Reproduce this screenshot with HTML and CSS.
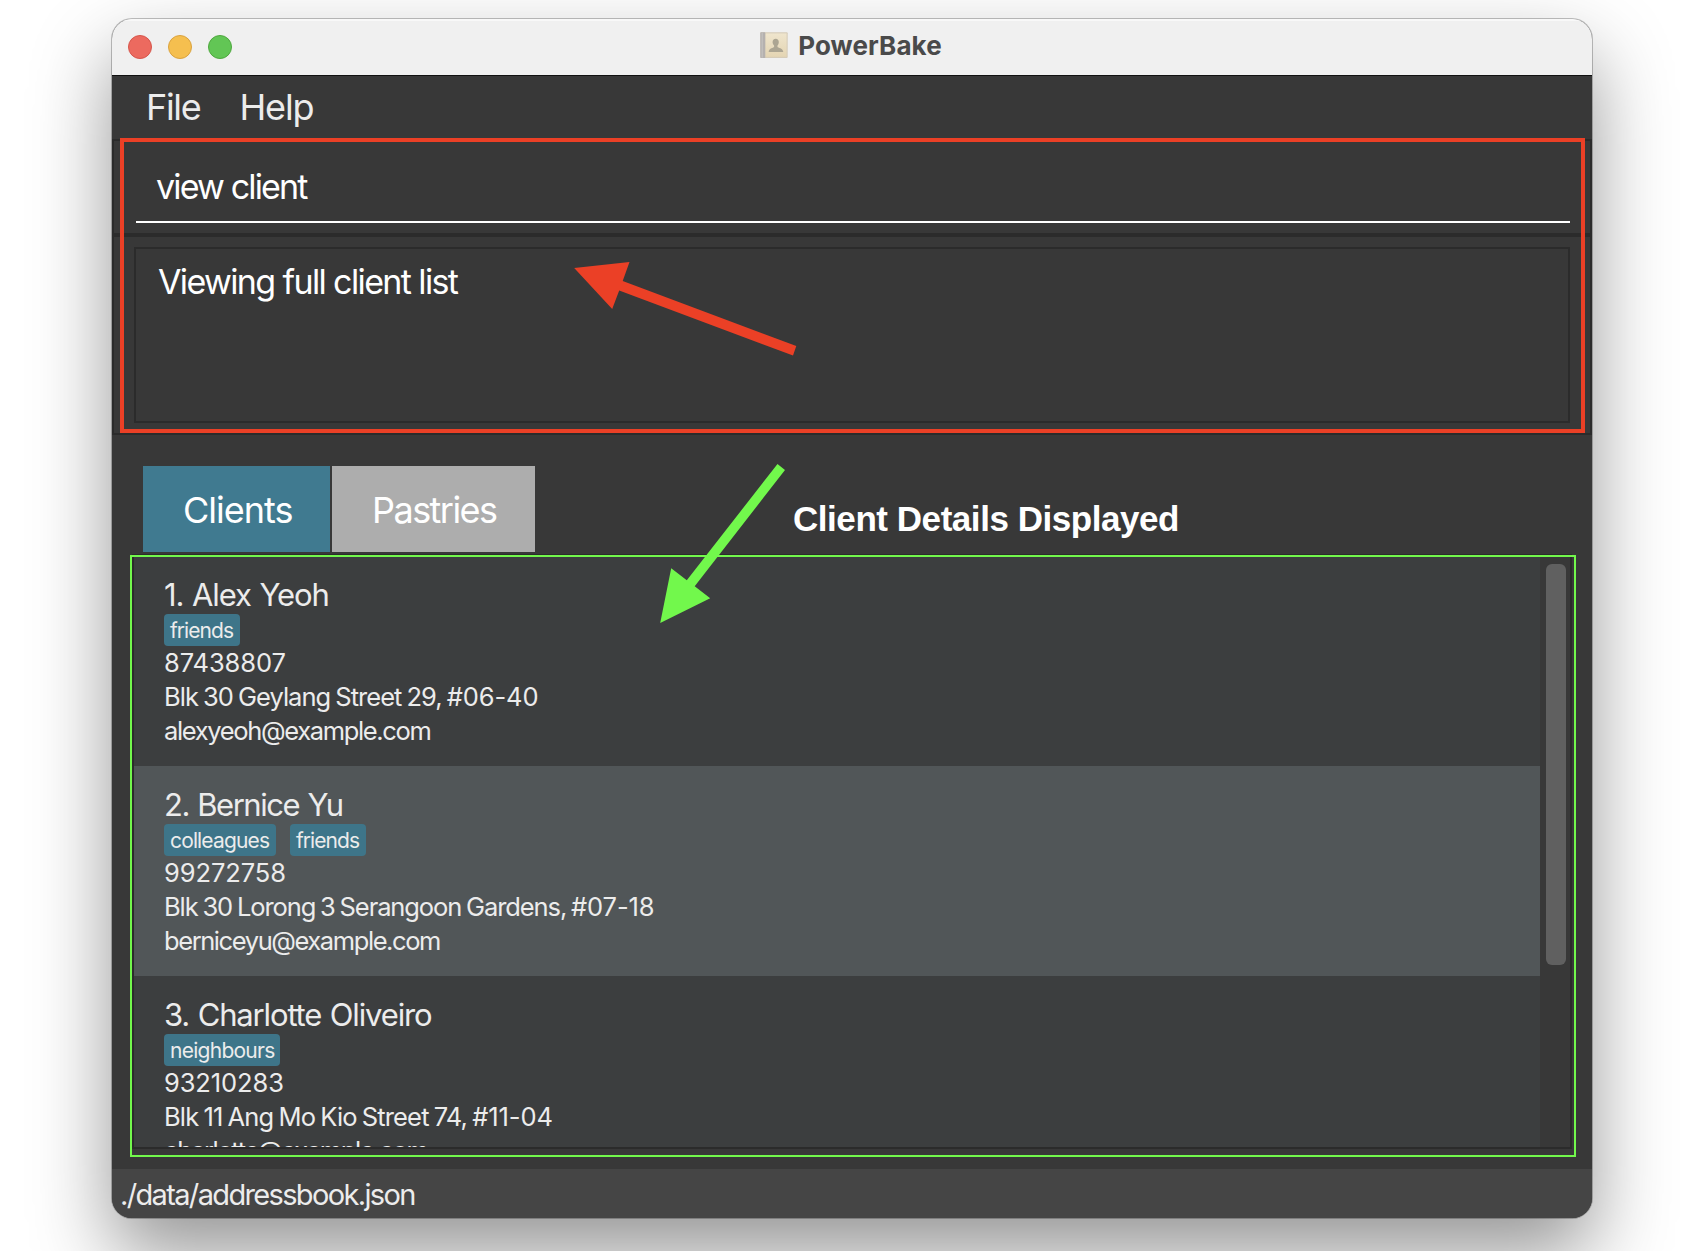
FILE: index.html
```html
<!DOCTYPE html>
<html lang="en">
<head>
<meta charset="utf-8">
<title>PowerBake</title>
<link rel="stylesheet" href="styles.css">
</head>
<body>
<div class="window">
  <header class="titlebar">
    <div class="lights">
      <span class="light light-close"></span>
      <span class="light light-min"></span>
      <span class="light light-zoom"></span>
    </div>
    <div class="title">
      <svg class="book" width="28" height="27" viewBox="0 0 28 27">
        <defs>
          <linearGradient id="cover" x1="0" y1="0" x2="0" y2="1">
            <stop offset="0" stop-color="#efe5cd"/>
            <stop offset="1" stop-color="#e4d5b3"/>
          </linearGradient>
        </defs>
        <rect x="0.3" y="0.3" width="27.4" height="25.6" rx="1" fill="#d6ccb8"/>
        <rect x="0.3" y="0.3" width="5" height="25.6" rx="0.6" fill="#b5b1af"/>
        <rect x="1.6" y="0.6" width="1.2" height="25" fill="#c4c1bf"/>
        <rect x="5.6" y="1.4" width="21" height="23.4" fill="url(#cover)"/>
        <path d="M15.7 6.8c2 0 3.1 1.4 3.1 3.3 0 1.5-.5 2.7-1.3 3.4v1.5c.4.9 5.300 1.200 5.700 4.500v.5H8.700v-.5c.4-3.300 5-3.600 5.400-4.500v-1.500c-.9-.7-1.500-1.900-1.500-3.400 0-1.900 1.100-3.300 3.100-3.300z" fill="#aca592"/>
      </svg>
      <span>PowerBake</span>
    </div>
  </header>

  <nav class="menubar">
    <span class="menu menu-file">File</span>
    <span class="menu menu-help">Help</span>
  </nav>

  <section class="command">
    <div class="command-field">view client</div>
  </section>

  <section class="result">
    <div class="result-box">Viewing full client list</div>
  </section>

  <main class="content">
    <div class="tabs">
      <div class="tab tab-active">Clients</div>
      <div class="tab tab-pastries">Pastries</div>
    </div>
    <div class="list">
      <div class="cards">
        <article class="card card-alex">
          <h2 class="name">1. Alex Yeoh</h2>
          <div class="tags"><span class="tag tag-friends">friends</span></div>
          <p class="phone">87438807</p>
          <p class="address">Blk 30 Geylang Street 29, <span class="unit">#06-40</span></p>
          <p class="email">alexyeoh@example.com</p>
        </article>
        <article class="card card-bernice">
          <h2 class="name">2. Bernice Yu</h2>
          <div class="tags"><span class="tag tag-colleagues">colleagues</span><span class="tag tag-friends">friends</span></div>
          <p class="phone">99272758</p>
          <p class="address">Blk 30 Lorong 3 Serangoon Gardens, <span class="unit">#07-18</span></p>
          <p class="email">berniceyu@example.com</p>
        </article>
        <article class="card card-charlotte">
          <h2 class="name">3. Charlotte Oliveiro</h2>
          <div class="tags"><span class="tag tag-neighbours">neighbours</span></div>
          <p class="phone">93210283</p>
          <p class="address">Blk 11 Ang Mo Kio Street 74, <span class="unit">#11-04</span></p>
          <p class="email">charlotte@example.com</p>
        </article>
      </div>
      <div class="scrollbar"><div class="thumb"></div></div>
    </div>
  </main>

  <footer class="statusbar">./data/addressbook.json</footer>
</div>

<div class="mark mark-red"></div>
<div class="mark mark-green"></div>
<div class="callout">Client Details Displayed</div>
<svg class="arrows" width="1704" height="1251" viewBox="0 0 1704 1251">
  <polygon fill="#eb4026" points="574.2,268 629.5,262 622.7,281 796.3,346 793,355.5 619.2,290.5 612.2,309"/>
  <polygon fill="#72f84c" points="660.2,623 671.2,568.3 686.8,580.2 777.5,464 785,470 694.7,586.3 710.2,598.3"/>
</svg>
</body>
</html>
```
FILE: styles.css
```css
* { box-sizing: border-box; }

html, body { height: 100%; overflow: hidden; }

body {
  margin: 0;
  padding: 19px 112px 0;
  background: #fff;
  font-family: Inter, "Noto Sans", sans-serif;
  position: relative;
}

h2, p { margin: 0; font-weight: 400; }

.window {
  height: 1199px;
  display: flex;
  flex-direction: column;
  border-radius: 20px;
  overflow: hidden;
  background: #383838;
  color: #ececec;
  box-shadow: 0 0 0 1px rgba(0, 0, 0, .24), 0 36px 80px rgba(0, 0, 0, .42);
  white-space: nowrap;
}

.titlebar {
  height: 57px;
  flex: none;
  display: grid;
  grid-template-columns: 1fr auto 1fr;
  align-items: center;
  padding: 0 16px;
  background: #f0f0f0;
  border-bottom: 1px solid #111;
  box-shadow: inset 0 2px 0 #f8f8f8;
}

.lights { display: flex; gap: 16px; }
.light { width: 24px; height: 24px; border-radius: 50%; border: 1px solid; }
.light-close { background: #ec6a5f; border-color: #d5564c; }
.light-min { background: #f5bf4f; border-color: #d9a23f; }
.light-zoom { background: #62c655; border-color: #4fa73f; }

.title {
  display: flex;
  align-items: center;
  gap: 10px;
  font-size: 26px;
  line-height: 32px;
  font-weight: 700;
  letter-spacing: .1px;
  color: #4a4a4a;
  padding-right: 2px;
}
.book { display: block; margin-top: -3px; }
.title span { margin-top: -2px; }

.menubar {
  height: 63px;
  flex: none;
  display: flex;
  gap: 39px;
  padding-left: 34px;
  font-size: 36px;
  line-height: 62px;
}
.menu-file { letter-spacing: -1.3px; }
.menu-help { letter-spacing: -1.15px; }

.command {
  height: 96px;
  flex: none;
  border: 2px solid #2b2b2b;
  padding: 0 20px 10px 22px;
  display: flex;
}
.command-field {
  flex: 1;
  height: 82px;
  border-bottom: 2px solid #fff;
  padding: 9px 0 0 20px;
  font-size: 34px;
  line-height: 74px;
  letter-spacing: -1.85px;
  color: #fff;
}

.result {
  height: 200px;
  flex: none;
  border: 2px solid #2b2b2b;
  padding: 10px 20px;
  display: flex;
}
.result-box {
  flex: 1;
  height: 176px;
  border: 2px solid #2b2b2b;
  padding: 11px 22px;
  font-size: 34px;
  line-height: 44px;
  letter-spacing: -1.62px;
  color: #fff;
}

.content {
  height: 734px;
  flex: none;
  padding: 31px 20px 0;
}

.tabs {
  display: flex;
  gap: 2px;
  margin-left: 11px;
  height: 88px;
}
.tab {
  height: 86px;
  padding: 0 40px;
  width: 187px;
  font-size: 36px;
  line-height: 88px;
  color: #fff;
  background: #adadad;
  letter-spacing: -1.54px;
}
.tab-active { background: #407a90; letter-spacing: -.99px; }
.tab-pastries { width: 203px; }

.list {
  height: 595px;
  border: 2px solid #2b2b2b;
  display: flex;
  overflow: hidden;
}
.cards { flex: 1; }

.card {
  height: 210px;
  padding: 18px 30px;
  background: #3c3e3f;
  font-size: 25.5px;
  line-height: 34px;
}
.card:nth-child(even) { background: #515658; }

.name { font-size: 31px; line-height: 41px; height: 40px; word-spacing: 1px; }
.card-alex .name { letter-spacing: -1.08px; }
.card-bernice .name { letter-spacing: -1.45px; }
.card-charlotte .name { letter-spacing: -1.15px; }

.tags { display: flex; gap: 14px; }
.tag {
  height: 32px;
  padding: 0 6px;
  border-radius: 4px;
  background: #3e7589;
  font-size: 21px;
  line-height: 33px;
}
.tag-friends { width: 76px; letter-spacing: -.95px; }
.tag-colleagues { width: 112px; letter-spacing: -.85px; }
.tag-neighbours { width: 116px; letter-spacing: -.73px; }

.phone { letter-spacing: -.1px; }
.address { word-spacing: -1.2px; }
.card-alex .address { letter-spacing: -.96px; }
.card-bernice .address { letter-spacing: -1.1px; }
.card-charlotte .address { letter-spacing: -.85px; }
.card .unit { letter-spacing: -.1px; }
.email { letter-spacing: -1.35px; }
.card-bernice .email { letter-spacing: -1.42px; }

.scrollbar { width: 30px; padding: 8px 4px 0 6px; background: #383838; }
.thumb { width: 20px; height: 401px; border-radius: 6px; background: #606060; }

.statusbar {
  flex: 1;
  padding-left: 8px;
  background: #454545;
  font-size: 29px;
  line-height: 51px;
  letter-spacing: -1.65px;
}

/* Annotations drawn over the application window */
.mark { position: absolute; }
.mark-red { left: 120px; top: 138px; width: 1465px; height: 295px; border: 4px solid #eb4026; }
.mark-green { left: 130px; top: 555px; width: 1446px; height: 602px; border: 2px solid #72f84c; }

.callout {
  position: absolute;
  left: 793px;
  top: 499px;
  font: 700 35px/40px "Liberation Sans", Arial, sans-serif;
  letter-spacing: -.45px;
  color: #fff;
}

.arrows { position: absolute; left: 0; top: 0; }
```
